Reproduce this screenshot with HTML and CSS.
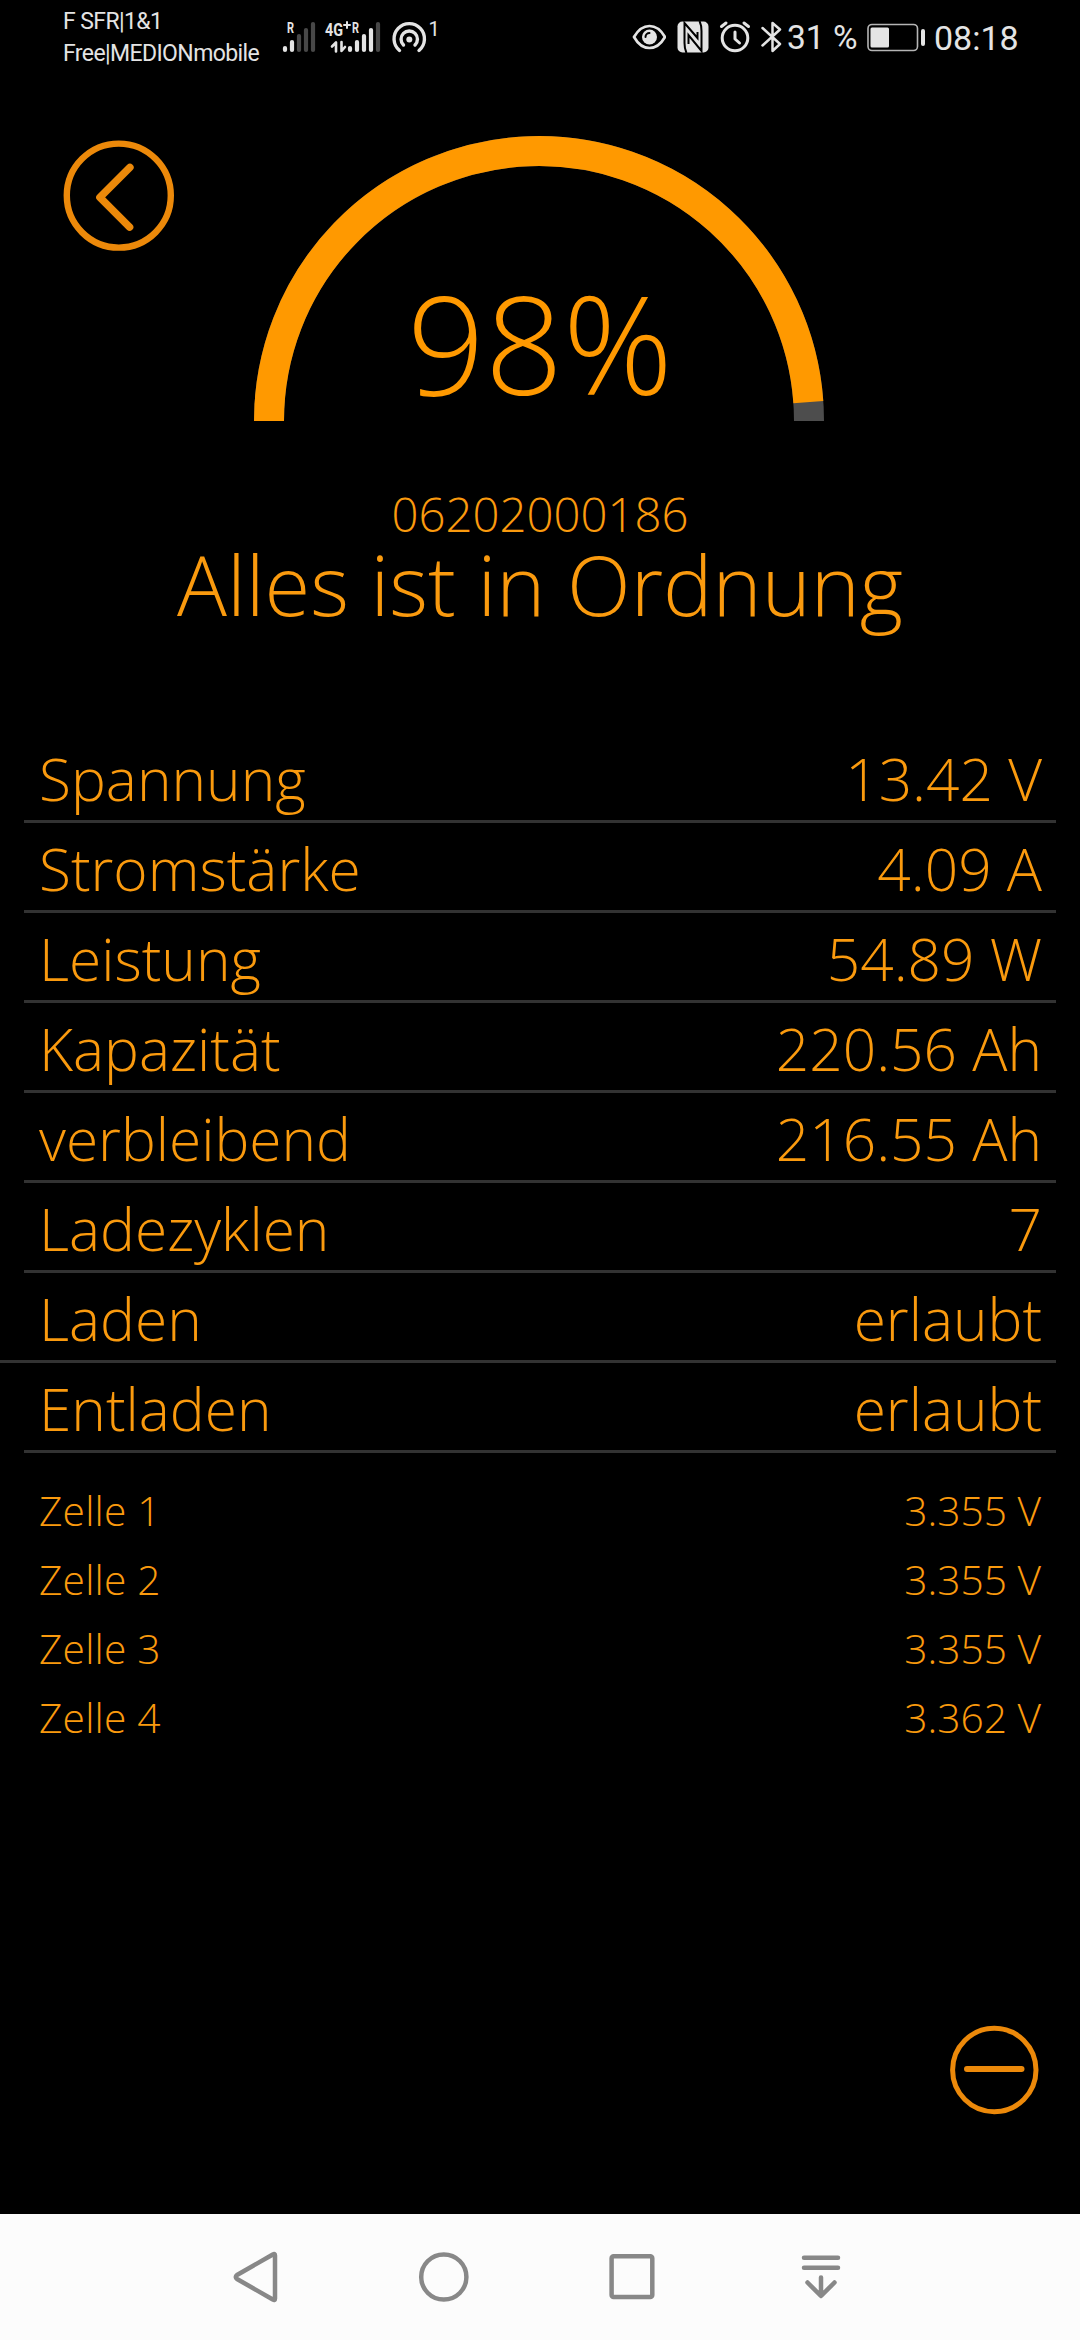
FILE: index.html
```html
<!DOCTYPE html>
<html lang="de">
<head>
<meta charset="utf-8">
<title>Batteriestatus</title>
<link rel="stylesheet" href="styles.css">
</head>
<body>
<div class="screen">
  <header class="status">
    <div class="carriers"><span>F SFR|1&amp;1</span><span>Free|MEDIONmobile</span></div>
    <svg class="signals" width="160" height="40" viewBox="280 16 160 40">
      <g class="bars">
        <path d="M285 48v2M292 42v8"/>
        <path class="off" d="M299 36v14M306 30v20M313 24v26"/>
        <path d="M350 48v2M357 42v8M364 36v14M371 30v20"/>
        <path class="off" d="M378 24v26"/>
      </g>
      <text class="net" x="287" y="32.500" textLength="7" lengthAdjust="spacingAndGlyphs">R</text>
      <text class="net big" x="325" y="36" textLength="18" lengthAdjust="spacingAndGlyphs">4G</text>
      <path class="line" stroke-width="2" d="M344 25h6M347 22v6"/>
      <text class="net" x="352" y="32.500" textLength="7" lengthAdjust="spacingAndGlyphs">R</text>
      <path class="line" stroke-width="2.600" d="M332 46.500l4-4V51.500M341.500 42v9l3.500-4"/>
      <g class="line" stroke-width="3.400">
        <path d="M399.500 50.500a15.200 15.200 0 1 1 19.500 0"/>
        <path d="M403.500 45a8.200 8.200 0 1 1 11.500 0"/>
      </g>
      <circle class="solid" cx="409.300" cy="39.500" r="3"/>
      <text class="hot" x="428.500" y="36">1</text>
    </svg>
    <div class="right">
      <svg width="34" height="34" viewBox="632 20 34 34">
        <path class="line" stroke-width="2.700" d="M634 37c4-7 9.500-11 15.500-11S661 30 665 37c-4 7-9.500 11-15.500 11S638 44 634 37z"/>
        <circle class="solid" cx="649.500" cy="37" r="7.500"/>
        <path d="M645.500 37a4 4 0 0 1 4-4" fill="none" stroke="#000" stroke-width="2" stroke-linecap="round"/>
      </svg>
      <svg class="nfc" width="32" height="32" viewBox="677 21 32 32">
        <rect class="solid" x="677.500" y="21.500" width="31" height="31" rx="5"/>
        <g fill="none" stroke="#000" stroke-width="2">
          <path d="M686.500 53c-1.500-3-2-6-2-10V23L697.500 38v-6"/>
          <path d="M699.500 21c1.500 3 2 6 2 10v20L688.500 35v9"/>
        </g>
      </svg>
      <svg class="alarm" width="32" height="34" viewBox="719 20 32 34">
        <g class="line" stroke-width="3"><circle cx="735" cy="38" r="12.800"/><path d="M735 32v7l4.500 4"/><path d="M721.500 26.500l4.500-3.500M744 23l4.500 3.500"/></g>
      </svg>
      <svg class="bt" width="22" height="34" viewBox="760 20 22 34">
        <path class="line" stroke-width="2.500" d="M762.500 28l17.500 16-7.500 7V23l7.500 6.500-17.500 16"/>
      </svg>
      <span class="pct">31 %</span>
      <svg class="batt" width="59" height="30" viewBox="867 22 59 30">
        <rect x="868" y="24.500" width="49.500" height="26" rx="4" fill="none" stroke="#b5b5b5" stroke-width="1.600"/>
        <rect class="solid" x="870.500" y="27.500" width="18.500" height="20" rx="1.500"/>
        <rect class="solid" x="921" y="29" width="4" height="17" rx="2"/>
      </svg>
      <span class="time">08:18</span>
    </div>
  </header>

  <section class="hero">
    <svg class="back" width="111" height="111" viewBox="0 0 111 111">
      <circle cx="55.800" cy="55.600" r="52" stroke-width="6.400"/>
      <path d="M66.900 27.400l-30 30 29.700 29.700" stroke-width="7.500"/>
    </svg>
    <svg class="arc" width="570" height="285" viewBox="0 0 570 285">
      <path class="track" d="M15 285A270 270 0 0 1 555 285"/>
      <path class="level" d="M15 285A270 270 0 0 1 554.340 266.170"/>
    </svg>
    <div class="charge">98%</div>
  </section>
  <div class="serial">06202000186</div>
  <h1 class="state">Alles ist in Ordnung</h1>

  <dl class="values">
    <div class="row"><dt>Spannung</dt><dd>13.42 V</dd></div>
    <div class="row"><dt>Stromstärke</dt><dd>4.09 A</dd></div>
    <div class="row"><dt>Leistung</dt><dd>54.89 W</dd></div>
    <div class="row"><dt>Kapazität</dt><dd>220.56 Ah</dd></div>
    <div class="row"><dt>verbleibend</dt><dd>216.55 Ah</dd></div>
    <div class="row"><dt>Ladezyklen</dt><dd>7</dd></div>
    <div class="row wide"><dt>Laden</dt><dd>erlaubt</dd></div>
    <div class="row"><dt>Entladen</dt><dd>erlaubt</dd></div>
  </dl>
  <dl class="cells">
    <div class="cell"><dt>Zelle 1</dt><dd>3.355 V</dd></div>
    <div class="cell"><dt>Zelle 2</dt><dd>3.355 V</dd></div>
    <div class="cell"><dt>Zelle 3</dt><dd>3.355 V</dd></div>
    <div class="cell"><dt>Zelle 4</dt><dd>3.362 V</dd></div>
  </dl>

  <svg class="minus" width="90" height="90" viewBox="949 2025 90 90">
    <circle cx="994.300" cy="2070" r="41.700" stroke-width="5"/>
    <path d="M967 2069h54.500" stroke-width="6"/>
  </svg>

  <nav class="nav">
    <svg class="nav-back" width="50" height="56" viewBox="231 2249 50 56"><path d="M275 2255.500v43q0 2.500-2.200 1L237 2279q-2.500-2 0-4l35.800-20.500q2.200-1.500 2.200 1z"/></svg>
    <svg class="nav-home" width="56" height="56" viewBox="416 2249 56 56"><circle cx="443.800" cy="2277" r="22.600"/></svg>
    <svg class="nav-recent" width="50" height="56" viewBox="607 2249 50 56"><rect x="611.600" y="2256.300" width="40.700" height="40.700" rx="2"/></svg>
    <svg class="nav-shade" width="44" height="56" viewBox="799 2249 44 56"><path d="M804 2257.800h34M804 2267.800h34M821 2277.500v18M807.500 2282.500l13.500 13.500 13.500-13.500"/></svg>
  </nav>
</div>
</body>
</html>
```
FILE: styles.css
```css
* { box-sizing: border-box; }
body { margin: 0; background: #000; }
svg { display: block; flex: none; }
dl, dd, h1 { margin: 0; }

.screen {
  width: 1080px;
  height: 2340px;
  display: flex;
  flex-direction: column;
  background: #000;
  color: #fa9a0e;
  font-family: "Open Sans", sans-serif;
  font-weight: 300;
  overflow: hidden;
}

/* system status bar */
.status {
  height: 80px;
  flex: none;
  display: flex;
  align-items: flex-start;
  padding-left: 63px;
  color: #e4e4e4;
  font-family: Roboto, sans-serif;
  font-weight: 400;
}
.carriers {
  width: 217px;
  padding-top: 6px;
  display: flex;
  flex-direction: column;
  font-size: 23px;
  line-height: 32px;
  letter-spacing: -0.600px;
  white-space: nowrap;
}
.signals { margin-top: 16px; }
.bars { stroke: #e4e4e4; stroke-width: 4.200px; stroke-linecap: round; }
.bars .off { stroke: #484848; }
.net { font-size: 15px; font-weight: 700; fill: #e4e4e4; }
.net.big { font-size: 19px; }
.hot { font-size: 20px; fill: #e4e4e4; }
.line { fill: none; stroke: #e4e4e4; stroke-linecap: round; stroke-linejoin: round; }
.solid { fill: #e4e4e4; }
.right {
  margin: 20px 0 0 192px;
  display: flex;
  align-items: flex-start;
  font-size: 34px;
  line-height: 36px;
  white-space: nowrap;
}
.nfc { margin: 1px 0 0 11px; }
.alarm { margin-left: 10px; }
.bt { margin-left: 9px; }
.pct { width: 80px; margin-left: 5px; font-size: 33.500px; }
.batt { margin-top: 2px; }
.time { margin-left: 8px; }

/* charge gauge */
.hero {
  height: 341px;
  flex: none;
  display: grid;
  grid-template-columns: 254px 570px 1fr;
  grid-template-rows: 341px;
}
.back, .minus { fill: none; stroke: #ec890a; stroke-linecap: round; stroke-linejoin: round; }
.back { grid-area: 1 / 1; margin: 60px 0 0 63px; }
.arc { grid-area: 1 / 2; margin-top: 56px; fill: none; stroke-width: 30px; }
.track { stroke: #4d4d4d; }
.level { stroke: #ff9900; }
.charge {
  grid-area: 1 / 2;
  align-self: end;
  padding: 0 0 19px 2px;
  color: #ff9900;
  font-size: 136.500px;
  line-height: 120px;
  text-align: center;
}
.serial {
  margin-top: 69px;
  font-size: 47.300px;
  line-height: 48px;
  text-align: center;
}
.state {
  font-size: 83.200px;
  font-weight: 300;
  line-height: 92px;
  text-align: center;
}

/* measurements */
.values { margin-top: 103px; font-size: 58.600px; line-height: 83px; }
.row {
  height: 90px;
  display: flex;
  justify-content: space-between;
  margin: 0 24px;
  padding: 4px 14px 0 15px;
  border-bottom: 3px solid #323232;
}
.row.wide { margin-left: 0; padding-left: 39px; }
.cells { margin-top: 23px; padding: 0 39px; font-size: 40.700px; line-height: 69px; }
.cell { display: flex; justify-content: space-between; }
.cell dt { letter-spacing: 0.200px; }

.minus { margin: auto 41px 99px auto; }

/* system navigation */
.nav {
  height: 126px;
  flex: none;
  display: flex;
  padding: 35px 0 0 231px;
  background: #fcfcfc;
}
.nav svg { fill: none; stroke: #888; stroke-width: 4.500px; stroke-linecap: round; stroke-linejoin: round; }
.nav-home, .nav-recent { margin-left: 135px; }
.nav-shade { margin-left: 142px; }
```
